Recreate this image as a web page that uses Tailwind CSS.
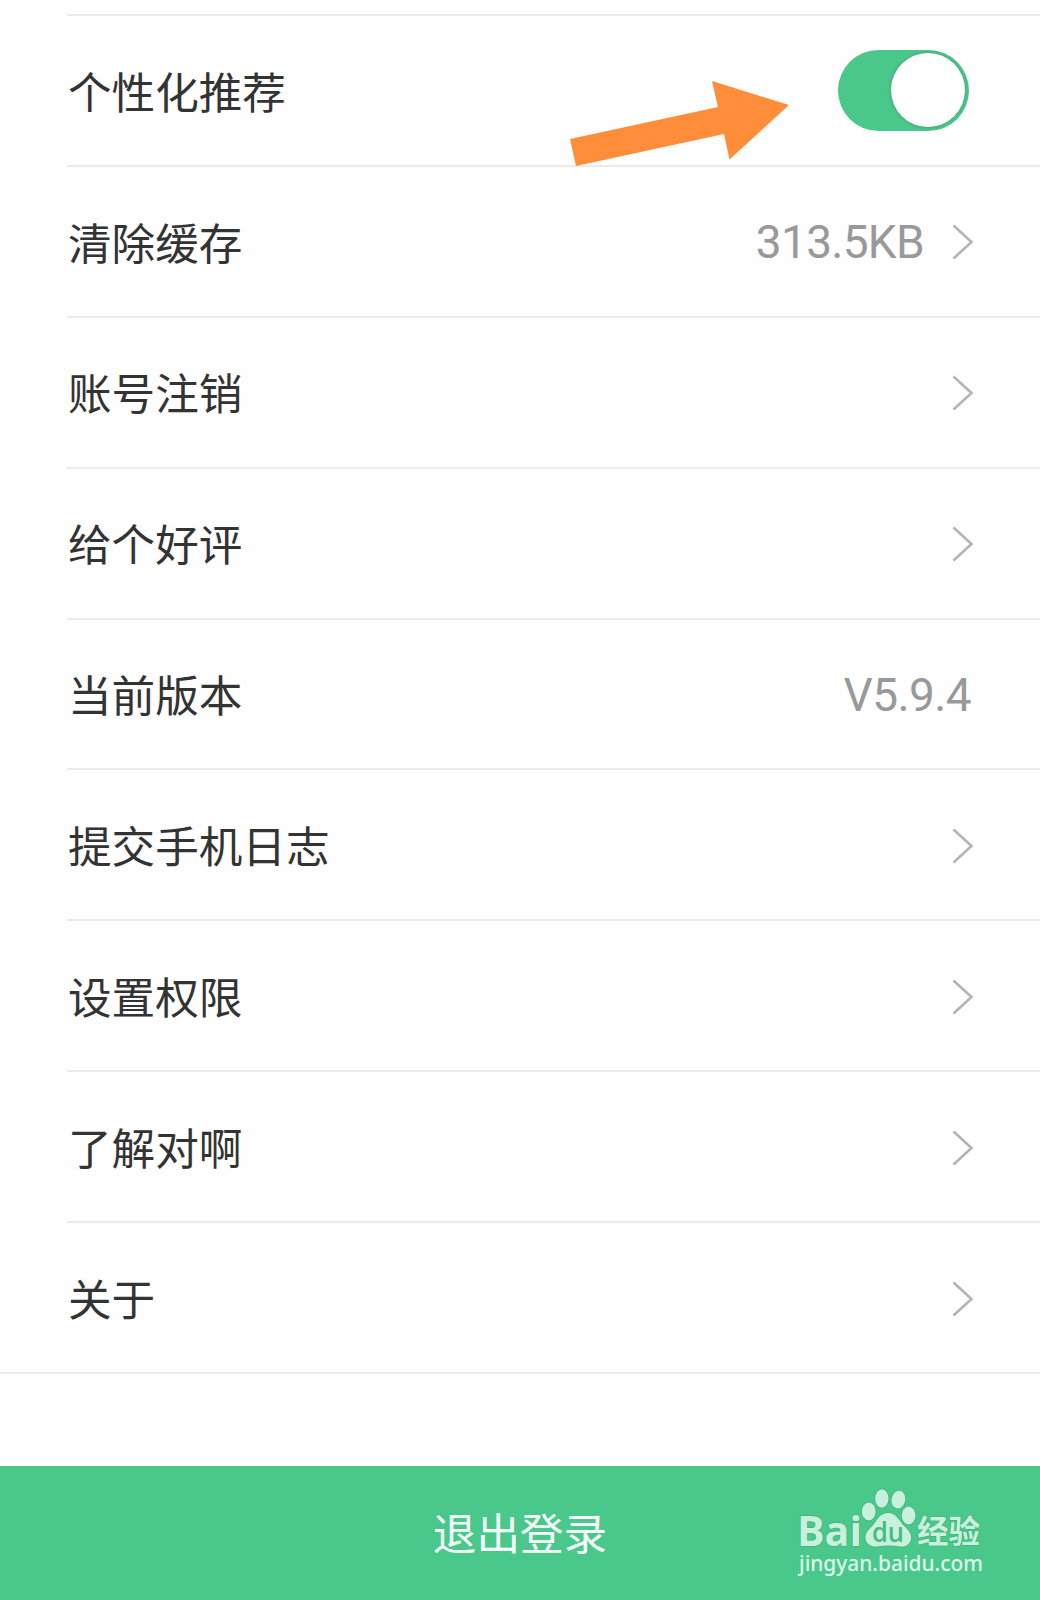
<!DOCTYPE html>
<html lang="zh-CN">
<head>
    <meta charset="UTF-8">
    <meta name="viewport" content="width=device-width, initial-scale=1.0">
    <title>设置</title>
    <script src="https://cdn.jsdelivr.net/npm/@tailwindcss/browser@4"></script>
</head>
<body class="relative flex h-[1600px] w-[1040px] flex-col overflow-hidden bg-[#fefefe] font-['Noto_Sans_CJK_SC',sans-serif] text-[43.6px] leading-none text-[#333333]">
    <!-- Settings list -->
    <ul class="flex h-[1372px] flex-col pt-[14px]">
        <li class="ml-[67px] flex flex-1 items-center justify-between border-t-2 border-[#ebebeb] pt-[2px] pr-[71px]">
            <span class="pb-[2px] pl-px">个性化推荐</span>
            <button type="button" class="mb-[2px] flex h-[81px] w-[131px] items-center justify-end rounded-full bg-[#4ac88b] pr-[4px]" aria-label="个性化推荐">
                <span class="size-[74px] rounded-full bg-white shadow-[0_0_3px_1px_rgba(90,110,100,0.4)]"></span>
            </button>
        </li>
        <li class="ml-[67px] flex flex-1 items-center justify-between border-t-2 border-[#ebebeb] pt-[2px] pr-[66px]">
            <span class="pb-[2px] pl-px">清除缓存</span>
            <span class="flex items-center gap-[28px]">
                <span class="font-[Roboto,sans-serif] text-[46px] tracking-[-0.7px] text-[#999999]">313.5KB</span>
                <svg class="h-[36px] w-[22px]" viewBox="0 0 22 36" fill="none" stroke="#b4b4b4" stroke-width="2.6"><path d="M1.500 1.500L19.500 18L1.500 34.500"/></svg>
            </span>
        </li>
        <li class="ml-[67px] flex flex-1 items-center justify-between border-t-2 border-[#ebebeb] pt-[2px] pr-[66px]">
            <span class="pb-[2px] pl-px">账号注销</span>
            <svg class="h-[36px] w-[22px]" viewBox="0 0 22 36" fill="none" stroke="#b4b4b4" stroke-width="2.6"><path d="M1.500 1.500L19.500 18L1.500 34.500"/></svg>
        </li>
        <li class="ml-[67px] flex flex-1 items-center justify-between border-t-2 border-[#ebebeb] pt-[2px] pr-[66px]">
            <span class="pb-[2px] pl-px">给个好评</span>
            <svg class="h-[36px] w-[22px]" viewBox="0 0 22 36" fill="none" stroke="#b4b4b4" stroke-width="2.6"><path d="M1.500 1.500L19.500 18L1.500 34.500"/></svg>
        </li>
        <li class="ml-[67px] flex flex-1 items-center justify-between border-t-2 border-[#ebebeb] pt-[2px] pr-[69px]">
            <span class="pb-[2px] pl-px">当前版本</span>
            <span class="font-[Roboto,sans-serif] text-[46px] tracking-[-0.6px] text-[#999999]">V5.9.4</span>
        </li>
        <li class="ml-[67px] flex flex-1 items-center justify-between border-t-2 border-[#ebebeb] pt-[2px] pr-[66px]">
            <span class="pb-[2px] pl-px">提交手机日志</span>
            <svg class="h-[36px] w-[22px]" viewBox="0 0 22 36" fill="none" stroke="#b4b4b4" stroke-width="2.6"><path d="M1.500 1.500L19.500 18L1.500 34.500"/></svg>
        </li>
        <li class="ml-[67px] flex flex-1 items-center justify-between border-t-2 border-[#ebebeb] pt-[2px] pr-[66px]">
            <span class="pb-[2px] pl-px">设置权限</span>
            <svg class="h-[36px] w-[22px]" viewBox="0 0 22 36" fill="none" stroke="#b4b4b4" stroke-width="2.6"><path d="M1.500 1.500L19.500 18L1.500 34.500"/></svg>
        </li>
        <li class="ml-[67px] flex flex-1 items-center justify-between border-t-2 border-[#ebebeb] pt-[2px] pr-[66px]">
            <span class="pb-[2px] pl-px">了解对啊</span>
            <svg class="h-[36px] w-[22px]" viewBox="0 0 22 36" fill="none" stroke="#b4b4b4" stroke-width="2.6"><path d="M1.500 1.500L19.500 18L1.500 34.500"/></svg>
        </li>
        <li class="ml-[67px] flex flex-1 items-center justify-between border-t-2 border-[#ebebeb] pt-[2px] pr-[66px]">
            <span class="pb-[2px] pl-px">关于</span>
            <svg class="h-[36px] w-[22px]" viewBox="0 0 22 36" fill="none" stroke="#b4b4b4" stroke-width="2.6"><path d="M1.500 1.500L19.500 18L1.500 34.500"/></svg>
        </li>
    </ul>
    <div class="h-[94px] border-t-2 border-[#ebebeb]"></div>

    <!-- Log out -->
    <button type="button" class="h-[134px] w-full bg-[#4ac88b] pb-[2px] text-[#f4fff9]">退出登录</button>

    <!-- Arrow pointing at the switch -->
    <svg class="absolute left-[560px] top-[70px] h-[100px] w-[240px]" viewBox="560 70 240 100" fill="#ff8d3a">
        <path d="M570 139L718 107L712 81L789 105L729.5 159.5L724 134L576 166Z"/>
    </svg>

    <!-- Watermark -->
    <svg class="absolute left-[780px] top-[1480px] h-[110px] w-[220px]" viewBox="780 1480 220 110" fill="#c9f0dc">
        <g stroke="#3fb57b" stroke-width="1.500" paint-order="stroke">
            <text x="797" y="1546" font-family="Open Sans" font-weight="700" font-size="41" textLength="65" lengthAdjust="spacingAndGlyphs">Bai</text>
            <ellipse cx="868.7" cy="1511.5" rx="6.9" ry="9"/>
            <ellipse cx="881.8" cy="1498.5" rx="6.7" ry="9.200"/>
            <ellipse cx="898.4" cy="1499.6" rx="6.9" ry="9" transform="rotate(10 898.4 1499.6)"/>
            <ellipse cx="908.6" cy="1515.5" rx="6.9" ry="9"/>
            <path d="M888 1513C896 1513 899 1520 903 1525C908 1530 912 1533 911 1539C910 1545 905 1547 900 1546.500C892 1545 885 1545 877 1546.500C871 1547 866 1544 865.500 1538C865 1532 870 1529 874 1524C878 1518 881 1513 888 1513Z"/>
            <text x="917" y="1543" font-family="Noto Sans CJK SC" font-weight="700" font-size="31.500" textLength="63" lengthAdjust="spacingAndGlyphs">经验</text>
        </g>
        <text x="872" y="1541.5" fill="#45bd83" font-family="Open Sans" font-weight="600" font-size="27" textLength="32" lengthAdjust="spacingAndGlyphs">du</text>
        <text x="799" y="1570.500" fill="#dcf8ea" font-family="Noto Sans" font-weight="500" font-size="22" textLength="184" lengthAdjust="spacingAndGlyphs">jingyan.baidu.com</text>
    </svg>
</body>
</html>
